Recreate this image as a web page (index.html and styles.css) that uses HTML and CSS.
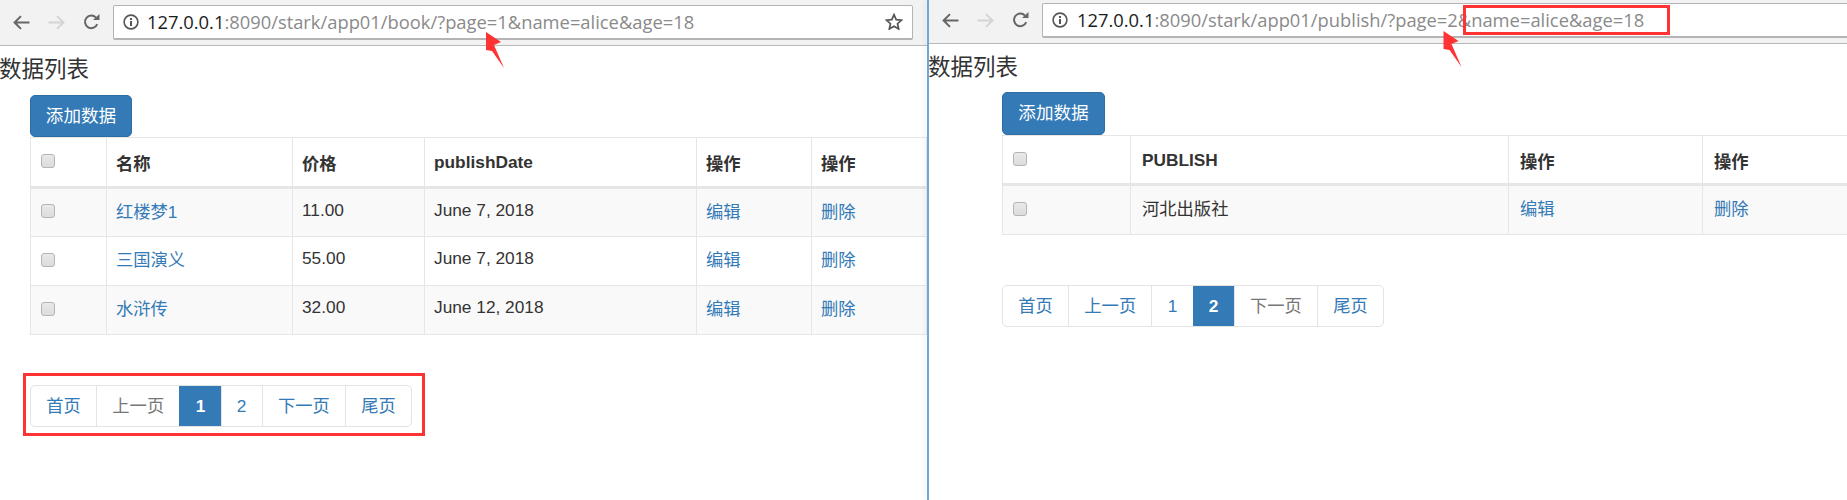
FILE: index.html
```html
<!DOCTYPE html>
<html lang="zh">
<head>
<meta charset="utf-8">
<title>数据列表</title>
<link rel="stylesheet" href="styles.css">
</head>
<body>
<div class="page">
  <section class="pane pane-left">
    <header class="toolbar">
      <svg class="nav-icon" viewBox="0 0 16 14"><path d="M15.5 7H1.5M7.5 1L1.5 7l6 6" fill="none" stroke="#666" stroke-width="1.9"/></svg>
      <svg class="nav-icon" viewBox="0 0 16 14"><path d="M.5 7h14M8.5 1l6 6-6 6" fill="none" stroke="#d4d4d4" stroke-width="1.9"/></svg>
      <svg class="nav-icon reload" viewBox="0 0 17 16"><path d="M14.2 10.2A6.3 6.3 0 1 1 13 3.6" fill="none" stroke="#666" stroke-width="2"/><path d="M10 6h6.5V0z" fill="#666"/></svg>
      <div class="urlbar">
        <svg class="info" viewBox="0 0 16 16"><circle cx="8" cy="8" r="6.9" fill="none" stroke="#555" stroke-width="1.6"/><path d="M7 7h2v5H7zM7 4h2v2H7z" fill="#555"/></svg>
        <span class="url"><b>127.0.0.1</b>:8090/stark/app01/book/?page=1&amp;name=alice&amp;age=18</span>
        <svg class="star" viewBox="0 0 18 17"><path d="M9 1.6l2.2 5 5.4.5-4.1 3.6 1.2 5.3L9 13.2 4.3 16l1.2-5.3L1.4 7.1l5.4-.5z" fill="none" stroke="#555" stroke-width="1.7"/></svg>
      </div>
    </header>
    <h1 class="title">数据列表</h1>
    <div class="content">
      <a class="btn">添加数据</a>
      <table class="grid">
        <colgroup><col class="c-check"><col class="c-name"><col class="c-price"><col class="c-date"><col class="c-op1"><col class="c-op2"></colgroup>
        <thead><tr><th><input type="checkbox" class="check"></th><th>名称</th><th>价格</th><th>publishDate</th><th>操作</th><th>操作</th></tr></thead>
        <tbody>
          <tr class="odd"><td><input type="checkbox" class="check"></td><td><a>红楼梦1</a></td><td>11.00</td><td>June 7, 2018</td><td><a>编辑</a></td><td><a>删除</a></td></tr>
          <tr><td><input type="checkbox" class="check"></td><td><a>三国演义</a></td><td>55.00</td><td>June 7, 2018</td><td><a>编辑</a></td><td><a>删除</a></td></tr>
          <tr class="odd"><td><input type="checkbox" class="check"></td><td><a>水浒传</a></td><td>32.00</td><td>June 12, 2018</td><td><a>编辑</a></td><td><a>删除</a></td></tr>
        </tbody>
      </table>
      <nav class="pager">
        <a>首页</a><a class="off">上一页</a><a class="on">1</a><a>2</a><a>下一页</a><a>尾页</a>
      </nav>
    </div>
    <div class="mark mark-pager"></div>
    <svg class="arrow arrow-left" viewBox="0 0 18 36"><path d="M0 0L15 10 8 13 18 36 6 19 0 18z" fill="#f33"/></svg>
  </section>
  <div class="divider"></div>
  <section class="pane pane-right">
    <header class="toolbar">
      <svg class="nav-icon" viewBox="0 0 16 14"><path d="M15.5 7H1.5M7.5 1L1.5 7l6 6" fill="none" stroke="#666" stroke-width="1.9"/></svg>
      <svg class="nav-icon" viewBox="0 0 16 14"><path d="M.5 7h14M8.5 1l6 6-6 6" fill="none" stroke="#d4d4d4" stroke-width="1.9"/></svg>
      <svg class="nav-icon reload" viewBox="0 0 17 16"><path d="M14.2 10.2A6.3 6.3 0 1 1 13 3.6" fill="none" stroke="#666" stroke-width="2"/><path d="M10 6h6.5V0z" fill="#666"/></svg>
      <div class="urlbar">
        <svg class="info" viewBox="0 0 16 16"><circle cx="8" cy="8" r="6.9" fill="none" stroke="#555" stroke-width="1.6"/><path d="M7 7h2v5H7zM7 4h2v2H7z" fill="#555"/></svg>
        <span class="url"><b>127.0.0.1</b>:8090/stark/app01/publish/?page=2&amp;name=alice&amp;age=18</span>
      </div>
    </header>
    <h1 class="title">数据列表</h1>
    <div class="content">
      <a class="btn">添加数据</a>
      <table class="grid">
        <colgroup><col class="c-pcheck"><col class="c-pub"><col class="c-pop1"><col class="c-pop2"></colgroup>
        <thead><tr><th><input type="checkbox" class="check"></th><th>PUBLISH</th><th>操作</th><th>操作</th></tr></thead>
        <tbody>
          <tr class="odd"><td><input type="checkbox" class="check"></td><td>河北出版社</td><td><a>编辑</a></td><td><a>删除</a></td></tr>
        </tbody>
      </table>
      <nav class="pager">
        <a>首页</a><a>上一页</a><a>1</a><a class="on">2</a><a class="off">下一页</a><a>尾页</a>
      </nav>
    </div>
    <div class="mark mark-url"></div>
    <svg class="arrow arrow-right" viewBox="0 0 18 36"><path d="M0 0L15 10 8 13 18 36 6 19 0 18z" fill="#f33"/></svg>
  </section>
</div>
</body>
</html>
```
FILE: styles.css
```css
* { box-sizing: border-box; }
html, body { margin: 0; padding: 0; background: #fff; }
body {
  font-family: "Liberation Sans", "Noto Sans CJK SC", sans-serif;
  font-size: 17.3px;
  color: #333;
  overflow: hidden;
}
.page { display: flex; width: 1847px; height: 500px; overflow: hidden; }
.pane { position: relative; height: 500px; overflow: hidden; }
.pane-left { width: 927px; flex: none; }
.pane-right { flex: 1; min-width: 0; }
.divider { width: 2px; flex: none; background: #6fa8d6; box-shadow: -3px 0 4px rgba(0,0,0,.07); position: relative; }

.toolbar {
  display: flex;
  align-items: center;
  background: #f2f2f2;
  border-bottom: 1px solid #b9b9b9;
  padding-left: 13px;
}
.pane-left .toolbar { height: 46px; padding-bottom: 1px; }
.pane-right .toolbar { height: 44px; padding-bottom: 3px; }
.nav-icon { width: 17px; height: 15px; margin-right: 18px; flex: none; }
.nav-icon.reload { width: 17px; height: 16px; margin-right: 13px; }
.urlbar {
  display: flex;
  align-items: center;
  flex: 1;
  height: 35px;
  margin-right: 14px;
  padding: 0 9px;
  background: #fff;
  border: 1px solid #b4b4b4;
  border-bottom-width: 2px;
  border-radius: 2px;
}
.pane-right .urlbar { margin-right: -4px; }
.info { width: 16px; height: 16px; flex: none; margin-right: 9px; }
.pane-left .info { margin-right: 8px; }
.url { flex: 1; font-family: "Open Sans", sans-serif; font-size: 18.35px; color: #8a8a8a; white-space: nowrap; }
.url b { font-weight: 400; color: #1c1c1c; }
.star { width: 18px; height: 17px; flex: none; }

.title {
  margin: 0 0 0 -1px;
  height: 48px;
  line-height: 48px;
  font-size: 22.5px;
  font-weight: 400;
  color: #333;
}
.pane-left .title { height: 49px; }
.content { padding-left: 30px; }
.pane-right .content { padding-left: 73px; }
.btn {
  display: block;
  width: 103px;
  height: 43px;
  line-height: 41px;
  font-size: 17.6px;
  text-align: center;
  color: #fff;
  background: #337ab7;
  border: 1px solid #2e6da4;
  border-radius: 5px;
}
.pane-left .btn { height: 42px; line-height: 40px; width: 102px; }
.grid { border-collapse: collapse; table-layout: fixed; }
.pane-left .grid { width: 896px; }
.pane-right .grid { width: 972px; }
.grid th, .grid td { border: 1.5px solid #e6e6e6; padding: 0 9px; text-align: left; vertical-align: middle; }
.grid td { padding-bottom: 5px; }
.grid th { font-weight: 700; border-bottom-width: 3px; }
.pane-right .grid th, .pane-right .grid td { padding-left: 11px; }
.pane-right .grid th { padding-top: 2px; }
.pane-left thead tr { height: 50px; }
.pane-left tbody tr { height: 49px; }
.pane-right thead tr { height: 49px; }
.pane-right tbody tr { height: 50px; }
.grid tr.odd { background: #f9f9f9; }
.grid a, .pager a { color: #337ab7; }
.c-check { width: 76px; }
.c-name { width: 186px; }
.c-price { width: 132px; }
.c-date { width: 272px; }
.c-op1 { width: 115px; }
.c-op2 { width: 115px; }
.c-pcheck { width: 128px; }
.c-pub { width: 378px; }
.c-pop1 { width: 194px; }
.c-pop2 { width: 272px; }
.check {
  appearance: none;
  display: block;
  width: 14px;
  height: 14px;
  margin: -3px 0 0 1px;
  background: linear-gradient(#e9e9e9, #dcdcdc);
  border: 1px solid #b5b5b5;
  border-radius: 3px;
}
tbody .check { margin-top: 2px; }
.pane-right .check { margin-left: -1px; }

.pager {
  display: inline-flex;
  height: 42px;
  margin-top: 50px;
  border: 1px solid #e3e3e3;
  border-radius: 5px;
  overflow: hidden;
  vertical-align: top;
}
.pager a { display: block; padding: 0 15.25px; line-height: 40px; border-left: 1px solid #e3e3e3; }
.pager a:first-child { border-left: 0; }
.pager a.off { color: #777; }
.pager a.on { color: #fff; background: #337ab7; border-left-color: #337ab7; font-weight: 700; margin: -1px 0; padding-top: 1px; height: 42px; }

.mark { position: absolute; border: 3px solid #f33; }
.mark-pager { left: 23px; top: 373px; width: 402px; height: 63px; }
.mark-url { left: 534px; top: 5px; width: 207px; height: 30px; }
.arrow { position: absolute; }
.arrow-left { left: 486px; top: 32px; width: 18px; height: 36px; }
.arrow-right { left: 512px; top: 31px; width: 23px; height: 36px; }
```
